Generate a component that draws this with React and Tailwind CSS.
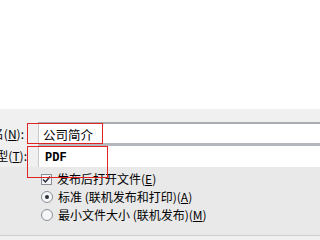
export default function App() {
  const cjk = { fontFamily: '"Noto Sans CJK SC", "Liberation Sans", sans-serif' };

  return (
    <div className="relative w-[320px] h-[240px] overflow-hidden bg-white text-[12px] text-black" style={cjk}>
      <div className="h-[109px] bg-white" />

      <div className="bg-[#f0f0f0] h-[126px] flex flex-col">
        {/* file name row */}
        <div className="flex mt-[13px] h-[21px]">
          <div className="w-[38px] flex justify-start overflow-hidden">
            <div className="ml-[-44px] w-[68px] flex justify-end items-center whitespace-nowrap leading-none pt-[3px]">
              文件名(<span className="underline">N</span>):
            </div>
          </div>
          <div className="flex-1 border-t-2 border-t-[#a8acb0] border-l border-l-[#c8c8c8] bg-white flex items-center pl-[4px] pt-[3px] leading-none text-[12.5px]">
            公司简介
          </div>
        </div>

        {/* type row */}
        <div className="flex h-[24px]">
          <div className="w-[38px] flex overflow-hidden">
            <div className="ml-[-45px] w-[72px] flex justify-end items-center whitespace-nowrap leading-none pt-[2px]">
              保存类型(<span className="underline">T</span>):
            </div>
          </div>
          <div className="flex-1 border-t-[3px] border-t-[#b4b8bc] border-l border-l-[#c8c8c8] bg-white flex items-center pl-[6px] pt-[2px]">
            <span className="font-bold leading-none" style={{ fontFamily: '"Liberation Mono", monospace' }}>PDF</span>
          </div>
        </div>

        {/* options */}
        <div className="flex-1 bg-[#e9e9e9] pl-[41px] pt-[6px] flex flex-col gap-[6px]">
          <div className="flex items-center gap-[5px] h-[12px]">
            <div className="w-[11px] h-[11px] border border-[#8a8f96] bg-[#f4f6f8] flex items-center justify-center">
              <svg width="9" height="9" viewBox="0 0 9 9">
                <path d="M1 4.5 L3.5 7 L8 1.5" stroke="#2a2f38" strokeWidth="1.5" fill="none" />
              </svg>
            </div>
            <span className="leading-none">发布后打开文件(<span className="underline">E</span>)</span>
          </div>
          <div className="flex items-center gap-[5px] h-[12px]">
            <div className="w-[12px] h-[12px] rounded-full border border-[#8a8f96] bg-[#f4f6f8] flex items-center justify-center">
              <div className="w-[4px] h-[4px] rounded-full bg-[#2a2f38]" />
            </div>
            <span className="leading-none">标准 (联机发布和打印)(<span className="underline">A</span>)</span>
          </div>
          <div className="flex items-center gap-[5px] h-[12px]">
            <div className="w-[12px] h-[12px] rounded-full border border-[#8a8f96] bg-[#f4f6f8]" />
            <span className="leading-none">最小文件大小 (联机发布)(<span className="underline">M</span>)</span>
          </div>
        </div>
      </div>

      <div className="h-[1px] bg-[#cfcfcf]" />
      <div className="h-[4px] bg-[#f0f0f0]" />

      {/* annotation boxes */}
      <div className="absolute left-[27px] top-[123px] w-[76px] h-[21px] border border-[#e02424]" />
      <div className="absolute left-[27px] top-[146px] w-[81px] h-[32px] border border-[#e02424]" />
    </div>
  );
}
